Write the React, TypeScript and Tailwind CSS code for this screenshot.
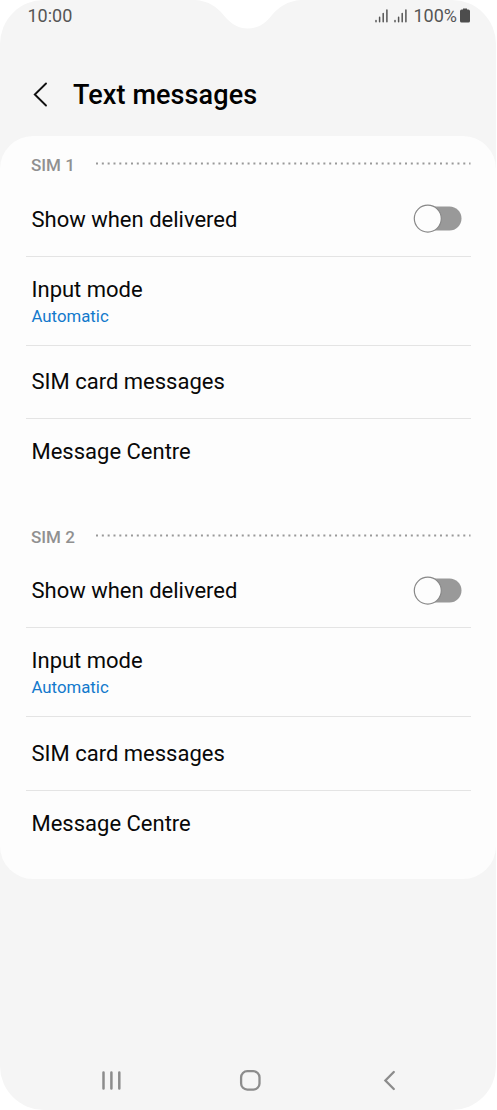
import React from 'react';

interface Sim {
  id: number;
  label: string;
  /** Height classes of the rows, top to bottom. */
  rows: [string, string, string, string];
}

const SIMS: Sim[] = [
  { id: 1, label: 'SIM 1', rows: ['h-[74px]', 'h-[89px]', 'h-[73px]', 'h-[66px]'] },
  { id: 2, label: 'SIM 2', rows: ['h-[73px]', 'h-[89px]', 'h-[74px]', 'h-[66px]'] },
];

// ─── Icons ────────────────────────────────────────────────────────────────────
const SignalIcon: React.FC = () => (
  <svg width="13" height="14" viewBox="0 0 13 14" stroke="#555" strokeWidth="1.5" strokeLinecap="round">
    <path d="M1 11.6V12.7M4.6 8.2V12.7M8.2 4.6V12.7M11.9 1V12.7" />
  </svg>
);

const BatteryIcon: React.FC = () => (
  <svg className="-mt-px" width="10" height="15" viewBox="0 0 10 15" fill="#4d4d4d">
    <path d="M3 0.4H7V1.6H8.4Q10 1.6 10 3.2V13Q10 14.6 8.4 14.6H1.6Q0 14.6 0 13V3.2Q0 1.6 1.6 1.6H3Z" />
  </svg>
);

// ─── StatusBar ────────────────────────────────────────────────────────────────
const StatusBar: React.FC = () => (
  <div className="flex h-8 items-center justify-between pl-[27.5px] pr-[26px] text-[18px] leading-8 text-[#555]">
    <span>10:00</span>
    <div className="flex items-center">
      <SignalIcon />
      <span className="w-[6px]" />
      <SignalIcon />
      <span className="ml-[6px] mr-[3px]">100%</span>
      <BatteryIcon />
    </div>
  </div>
);

// ─── SectionHeader ────────────────────────────────────────────────────────────
const SectionHeader: React.FC<{ label: string }> = ({ label }) => (
  <div className="flex h-[47px] pl-[31px]">
    <span className="w-[65px] pt-[18px] text-[17px] font-medium leading-[22px] text-[#909090]">{label}</span>
    <svg className="mt-[26px]" width="375" height="3" viewBox="0 0 375 3">
      <line x1="0" y1="1.5" x2="374.5" y2="1.5" stroke="#999" strokeWidth="2" strokeDasharray="2 3.83" />
    </svg>
  </div>
);

// ─── Row ──────────────────────────────────────────────────────────────────────
interface RowProps {
  title: string;
  height: string;
  value?: string;
  toggle?: boolean;
  last?: boolean;
}

const Row: React.FC<RowProps> = ({ title, height, value, toggle, last }) => (
  <div
    className={`ml-[26px] mr-[25px] flex items-center justify-between pl-[5.5px] pr-[9px] ${height} ${
      last ? '' : 'border-b border-[#e4e4e4]'
    }`}
  >
    <div className={`flex flex-col ${value ? 'pt-[3px]' : ''}`}>
      <span className="text-[22px] leading-[28px] text-[#080808]">{title}</span>
      {value && <span className="text-[16.8px] leading-[25px] text-[#1279cc]">{value}</span>}
    </div>
    {toggle && (
      <svg className="mb-px" width="49" height="30" viewBox="0 0 49 30">
        <rect x="8" y="2.6" width="40.5" height="24" rx="12" fill="#999" />
        <circle cx="14.8" cy="14.6" r="13.5" fill="#fdfdfd" stroke="#888" strokeWidth="1.2" />
      </svg>
    )}
  </div>
);

const SimSection: React.FC<{ sim: Sim }> = ({ sim }) => (
  <section>
    <SectionHeader label={sim.label} />
    <Row title="Show when delivered" height={sim.rows[0]} toggle />
    <Row title="Input mode" height={sim.rows[1]} value="Automatic" />
    <Row title="SIM card messages" height={sim.rows[2]} />
    <Row title="Message Centre" height={sim.rows[3]} last />
  </section>
);

// ─── NavBar ───────────────────────────────────────────────────────────────────
const NavBar: React.FC = () => (
  <nav className="mt-auto flex h-[59px] items-center pl-[101px]">
    <svg width="20" height="22" viewBox="0 0 20 22" stroke="#8c8c8c" strokeWidth="2.5" strokeLinecap="round">
      <path d="M2.5 2.4V18.6M10.4 2.4V18.6M18.3 2.4V18.6" />
    </svg>
    <svg className="ml-[118px]" width="22" height="22" viewBox="0 0 22 22" fill="none" stroke="#8c8c8c" strokeWidth="2.3">
      <rect x="2.1" y="1.2" width="18.4" height="18.4" rx="6.2" />
    </svg>
    <svg className="ml-[122px]" width="13" height="22" viewBox="0 0 13 22" fill="none" stroke="#8c8c8c" strokeWidth="2.3" strokeLinecap="round">
      <path d="M10.8 2L2.4 10.5L10.8 19" />
    </svg>
  </nav>
);

export default function App() {
  return (
    <div className="h-[1110px] w-[497px] overflow-hidden bg-white font-['Roboto',sans-serif]">
      <div className="relative flex h-[1110px] w-[496px] flex-col overflow-hidden rounded-[44px] bg-[#f5f5f5]">
        {/* Camera notch */}
        <svg className="absolute left-[190px] top-0" width="116" height="30" viewBox="0 0 116 30" fill="#fff">
          <path d="M5 0C19 1 27 7 33.5 15C41 24.500 49 28.5 57.500 28.5C67 28.5 75 24.500 82 15C89 7 97 1 111 0Z" />
        </svg>

        <StatusBar />

        <header className="flex h-[104px] items-center pb-[3px] pl-[33px] pt-[24px]">
          <svg width="15" height="26" viewBox="0 0 15 26" fill="none" stroke="#111" strokeWidth="1.9" strokeLinecap="round">
            <path d="M13 1.5L1.8 12.5L13 23.5" />
          </svg>
          <h1 className="ml-[25px] pt-px text-[27px] font-medium leading-8 tracking-[0.1px] text-black">Text messages</h1>
        </header>

        <main className="flex h-[743px] flex-col gap-[23px] rounded-[33px] bg-[#fdfdfd]">
          {SIMS.map(sim => (
            <SimSection key={sim.id} sim={sim} />
          ))}
        </main>

        <NavBar />
      </div>
    </div>
  );
}
